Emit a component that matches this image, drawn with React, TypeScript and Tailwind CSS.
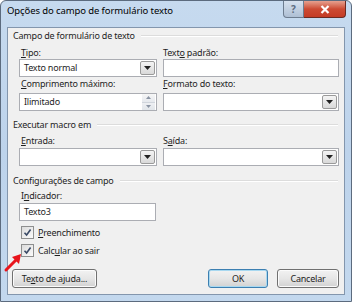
import { ReactNode } from 'react';

const font = { fontFamily: '"Noto Sans", "Liberation Sans", Arial, sans-serif' };

function Label({ children, className = '' }: { children: ReactNode; className?: string }) {
    return <div className={`h-[12px] leading-[12px] text-[9px] tracking-[-0.2px] text-[#1e1e1e] ${className}`}>{children}</div>;
}

function Section({ title, className = '' }: { title: string; className?: string }) {
    return (
        <div className={`flex items-center h-[12px] pl-[5px] pr-[6px] gap-[6px] ${className}`}>
            <span className="leading-[12px] text-[9px] tracking-[-0.2px] text-[#1e1e1e] whitespace-nowrap">{title}</span>
            <div className="flex-1 h-[2px] border-t border-[#dcdcdc] border-b border-b-white" />
        </div>
    );
}

function DropArrow() {
    return (
        <div className="w-[15px] my-[1px] mr-[1px] border border-[#9a9a9a] rounded-[2px] bg-gradient-to-b from-[#f4f4f4] to-[#d9d9d9] flex items-center justify-center">
            <svg width="7" height="4" viewBox="0 0 7 4">
                <path d="M0 0h7L3.5 4z" fill="#222" />
            </svg>
        </div>
    );
}

function Combo({ value = '', className = '' }: { value?: string; className?: string }) {
    return (
        <div className={`h-[18px] flex border border-[#abadb3] bg-white ${className}`}>
            <div className="flex-1 pl-[4px] text-[9px] tracking-[-0.2px] leading-[16px] text-[#1e1e1e]">{value}</div>
            <DropArrow />
        </div>
    );
}

function Spinner({ value, className = '' }: { value: string; className?: string }) {
    return (
        <div className={`h-[18px] flex border border-[#abadb3] bg-white ${className}`}>
            <div className="flex-1 pl-[4px] text-[9px] tracking-[-0.2px] leading-[16px] text-[#1e1e1e]">{value}</div>
            <div className="w-[13px] mr-[1px] flex flex-col">
                <div className="flex-1 flex items-center justify-center bg-gradient-to-b from-[#f6f6f6] to-[#e6e9ee] border-b border-[#d0d5dc]">
                    <svg width="5" height="3" viewBox="0 0 5 3"><path d="M0 3h5L2.5 0z" fill="#8a94a3" /></svg>
                </div>
                <div className="flex-1 flex items-center justify-center bg-gradient-to-b from-[#eef0f3] to-[#e1e5ea]">
                    <svg width="5" height="3" viewBox="0 0 5 3"><path d="M0 0h5L2.5 3z" fill="#8a94a3" /></svg>
                </div>
            </div>
        </div>
    );
}

function Input({ value = '', className = '' }: { value?: string; className?: string }) {
    return (
        <div className={`h-[18px] border border-[#abadb3] bg-white pl-[4px] text-[9px] tracking-[-0.2px] leading-[16px] text-[#1e1e1e] ${className}`}>
            {value}
        </div>
    );
}

function Check({ children, className = '' }: { children: ReactNode; className?: string }) {
    return (
        <div className={`flex items-center h-[13px] gap-[4px] ${className}`}>
            <div className="w-[13px] h-[13px] border border-[#8e8f8f] bg-gradient-to-br from-[#dcdcdc] to-[#fbfbfb] flex items-center justify-center">
                <svg width="9" height="9" viewBox="0 0 9 9">
                    <path d="M1.5 4.8 3.6 7 7.6 1.5" fill="none" stroke="#3a4a66" strokeWidth="1.6" />
                </svg>
            </div>
            <span className="text-[9px] tracking-[-0.2px] leading-[12px] text-[#1e1e1e]">{children}</span>
        </div>
    );
}

function Button({ children, primary = false, className = '' }: { children: ReactNode; primary?: boolean; className?: string }) {
    return (
        <div
            className={`h-[19px] rounded-[3px] border flex items-center justify-center text-[9px] tracking-[-0.2px] text-[#1e1e1e] bg-gradient-to-b from-[#f2f2f2] via-[#e6e6e6] to-[#d2d2d2] ${
                primary ? 'border-[#3c7fb1] shadow-[inset_0_0_0_1px_#a8d8f0]' : 'border-[#707070] shadow-[inset_0_0_0_1px_#fbfbfb]'
            } ${className}`}
        >
            {children}
        </div>
    );
}

export default function App() {
    return (
        <div style={font} className="relative w-[352px] h-[302px] overflow-hidden">
            <div className="w-[352px] h-[302px] rounded-t-[6px] border border-[#5c6b7e] bg-gradient-to-b from-[#c6daef] via-[#bdd3eb] to-[#c3d8ee] flex flex-col">
                {/* Title bar */}
                <div className="h-[26px] flex items-start shrink-0">
                    <div className="pl-[6px] pt-[3px] text-[9.5px] tracking-[-0.1px] leading-[14px] text-black">Opções do campo de formulário texto</div>
                    <div className="ml-auto mr-[5px] flex">
                        <div className="w-[21px] h-[17px] rounded-bl-[4px] border border-t-0 border-[#6d7c8f] bg-gradient-to-b from-[#d6e1ee] to-[#aebfd4] flex items-center justify-center text-[10px] font-bold text-[#5d6c80]">
                            ?
                        </div>
                        <div className="w-[42px] h-[17px] rounded-br-[4px] border border-l-0 border-t-0 border-[#6b2a22] bg-gradient-to-b from-[#e5a08f] via-[#cc4a33] to-[#c43b25] flex items-center justify-center">
                            <svg width="10" height="9" viewBox="0 0 10 9">
                                <path d="M1.5 1 8.5 8M8.5 1 1.5 8" stroke="#fff" strokeWidth="2.2" />
                            </svg>
                        </div>
                    </div>
                </div>

                {/* Client */}
                <div className="mx-[6px] mb-[6px] flex-1 border border-[#8396ad] bg-[#f0f0f0] pt-[2px] flex flex-col">
                    <Section title="Campo de formulário de texto" />
                    <div className="flex pl-[11px] pr-[5px] gap-[6px] mt-[5px]">
                        <div className="w-[138px] flex flex-col">
                            <Label className="pl-[2px]"><u>T</u>ipo:</Label>
                            <Combo value="Texto normal" />
                            <Label className="pl-[2px] mt-[1px]"><u>C</u>omprimento máximo:</Label>
                            <Spinner value="Ilimitado" className="mt-[3px]" />
                        </div>
                        <div className="flex-1 flex flex-col">
                            <Label>Text<u>o</u> padrão:</Label>
                            <Input />
                            <Label className="mt-[1px]"><u>F</u>ormato do texto:</Label>
                            <Combo className="mt-[3px]" />
                        </div>
                    </div>

                    <Section title="Executar macro em" className="mt-[8px]" />
                    <div className="flex pl-[11px] pr-[5px] gap-[6px] mt-[4px]">
                        <div className="w-[138px] flex flex-col">
                            <Label className="pl-[2px]"><u>E</u>ntrada:</Label>
                            <Combo className="mt-[1px]" />
                        </div>
                        <div className="flex-1 flex flex-col">
                            <Label>S<u>a</u>ída:</Label>
                            <Combo className="mt-[1px]" />
                        </div>
                    </div>

                    <Section title="Configurações de campo" className="mt-[9px]" />
                    <div className="pl-[11px] flex flex-col mt-[3px]">
                        <Label className="pl-[2px]">I<u>n</u>dicador:</Label>
                        <Input value="Texto3" className="w-[137px] mt-[1px]" />
                        <Check className="mt-[5px] pl-[2px]"><u>P</u>reenchimento</Check>
                        <Check className="mt-[5px] pl-[2px]">Calc<u>u</u>lar ao sair</Check>
                    </div>

                    <div className="flex items-center pl-[4px] pr-[5px] mt-auto mb-[6px]">
                        <Button className="w-[85px]">Te<u>x</u>to de ajuda...</Button>
                        <Button primary className="w-[60px] ml-auto">OK</Button>
                        <Button className="w-[62px] ml-[9px]">Cancelar</Button>
                    </div>
                </div>
            </div>

            {/* red pointer arrow */}
            <svg className="absolute left-[3px] top-[251px]" width="22" height="22" viewBox="0 0 22 22">
                <path d="M3 19 14 8" stroke="#e8141b" strokeWidth="3" strokeLinecap="round" />
                <path d="M18 3 9 6l7 7z" fill="#e8141b" />
            </svg>
        </div>
    );
}
